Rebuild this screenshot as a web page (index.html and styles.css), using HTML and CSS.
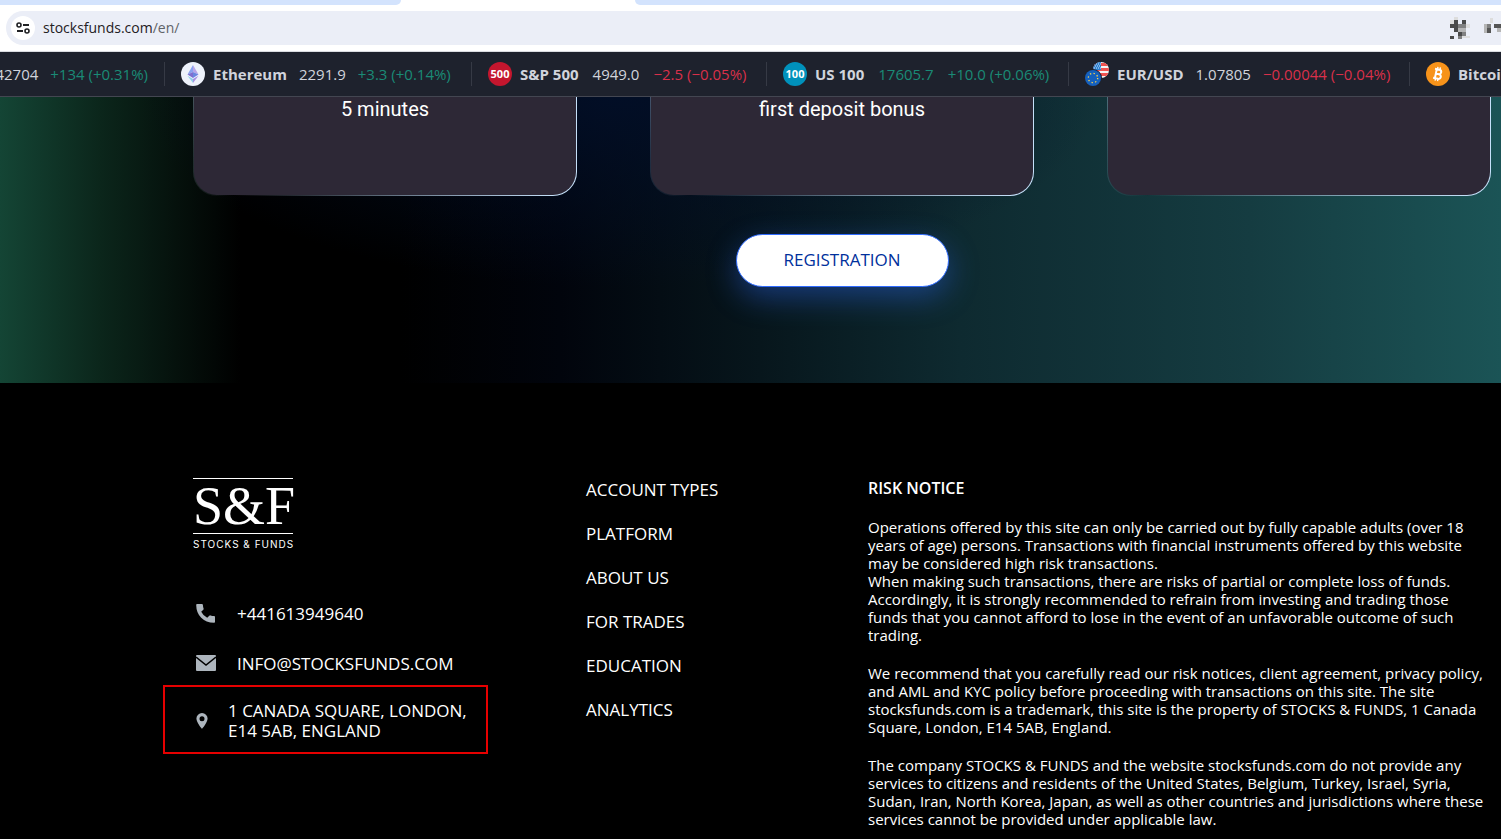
FILE: index.html
```
<!DOCTYPE html>
<html lang="en">
<head>
    <meta charset="UTF-8">
    <meta name="viewport" content="width=device-width, initial-scale=1.0">
    <title>Stocks &amp; Funds</title>
    <link rel="stylesheet" href="styles.css">
</head>
<body>
    <div class="browser">
        <div class="tabs">
            <div class="tab-left"></div>
            <div class="tab-right"></div>
        </div>
        <div class="address-bar">
            <button class="site-info" aria-label="Site information">
                <svg width="14" height="12" viewBox="0 0 14 12" fill="none" stroke="#202124" stroke-width="2">
                    <circle cx="3" cy="3" r="2" stroke-width="1.6"/>
                    <path d="M7 3h6M1 9h6"/>
                    <circle cx="11" cy="9" r="2" stroke-width="1.6"/>
                </svg>
            </button>
            <div class="url">stocksfunds.com<span>/en/</span></div>
            <svg class="blurred" width="55" height="24" viewBox="0 0 55 24">
                <path fill="#ddd" d="M8 1h4v3H8zM4 4h4v4H4zM20 8h4v4h-4zM16 20h8v2h-8zM44 2h3v5h-3z"/>
                <path fill="#4a4a4a" d="M8 4h4v4H8zM16 4h4v4h-4zM4 8h8v4H4zM8 12h4v4H8zM12 16h4v4h-4zM4 20h4v3H4z"/>
                <path fill="#808080" d="M12 8h8v4h-8zM16 16h4v4h-4zM12 20h4v3h-4zM41 8h4v4h-4z"/>
                <path fill="#b5b5b5" d="M12 12h8v4h-8zM38 8h3v9h-3zM51 12h4v4h-4z"/>
                <path fill="#555" d="M41 12h4v5h-4zM48 8h7v4h-7z"/>
            </svg>
        </div>
    </div>

    <div class="ticker">
        <div class="quote quote-first">
            <span class="price">42704</span>
            <span class="up">+134 (+0.31%)</span>
        </div>
        <div class="quote quote-eth">
            <svg width="24" height="24" viewBox="0 0 24 24">
                <circle cx="12" cy="12" r="12" fill="#eef2fb"/>
                <path d="M12 3v7L6.500 12.500z" fill="#87a1f0"/>
                <path d="M12 3v7l5.500 2.500z" fill="#b7a5e8"/>
                <path d="M12 10v6l-5.500-3.500z" fill="#7d6fd0"/>
                <path d="M12 10v6l5.500-3.500z" fill="#6a86e0"/>
                <path d="M6.500 13.800L12 21v-4z" fill="#8fd0e8"/>
                <path d="M17.500 13.800L12 21v-4z" fill="#a78fe2"/>
            </svg>
            <b>Ethereum</b>
            <span class="price">2291.9</span>
            <span class="up">+3.3 (+0.14%)</span>
        </div>
        <div class="quote quote-sp">
            <span class="index red">500</span>
            <b>S&amp;P 500</b>
            <span class="price">4949.0</span>
            <span class="down">−2.5 (−0.05%)</span>
        </div>
        <div class="quote quote-us">
            <span class="index blue">100</span>
            <b>US 100</b>
            <span class="up">17605.7</span>
            <span class="up">+10.0 (+0.06%)</span>
        </div>
        <div class="quote quote-eur">
            <svg width="24" height="24" viewBox="0 0 24 24">
                <defs>
                    <clipPath id="flag"><circle cx="16" cy="8" r="8"/></clipPath>
                </defs>
                <g clip-path="url(#flag)">
                    <path fill="#f5f5f5" d="M8 0h16v16H8z"/>
                    <path fill="#ef5350" d="M8 1h16v3H8zM8 6h16v3H8zM8 11h16v3H8z"/>
                    <path fill="#2a7fd0" d="M8 0h8v8H8z"/>
                    <path stroke="#cfe6fa" stroke-dasharray="1 1" d="M9 2h7M10 4h6M9 6h7"/>
                </g>
                <circle cx="8" cy="16" r="9" fill="#1e222d"/>
                <circle cx="8" cy="16" r="8" fill="#1560bd"/>
                <circle cx="8" cy="16" r="4.700" fill="none" stroke="#ffd54a" stroke-width="1.300" stroke-dasharray="1.300 2.390"/>
            </svg>
            <b>EUR/USD</b>
            <span class="price">1.07805</span>
            <span class="down">−0.00044 (−0.04%)</span>
        </div>
        <div class="quote">
            <svg width="24" height="24" viewBox="0 0 24 24">
                <circle cx="12" cy="12" r="12" fill="#f7931a"/>
                <g transform="rotate(12 12 12)" fill="none" stroke="#fff" stroke-width="2">
                    <path d="M8 7.500h4.500a2.200 2.200 0 0 1 0 4.500h-3h3.500a2.300 2.300 0 0 1 0 4.700H8M9.800 7v10"/>
                    <path stroke-width="1.400" d="M10.500 5v2M13 5v2M10.500 17v2M13 17v2"/>
                </g>
            </svg>
            <b>Bitcoin</b>
        </div>
    </div>

    <section class="steps">
        <div class="cards">
            <div class="card">5 minutes</div>
            <div class="card">first deposit bonus</div>
            <div class="card"></div>
        </div>
        <button class="btn">REGISTRATION</button>
    </section>

    <footer>
        <div class="company">
            <a class="logo" href="#">
                <span class="logo-name">S&amp;F</span>
                <span class="logo-text">STOCKS &amp; FUNDS</span>
            </a>
            <a class="contact" href="tel:+441613949640">
                <svg width="20" height="20" viewBox="0 0 20 20" fill="#adb5bd">
                    <path d="M1 1h5q.8 0 .9.900.1 2 .7 3.600.2.700-.3 1.200L5.200 8.800q2 4 6 6l2.100-2.100q.5-.5 1.200-.3 1.800.6 3.600.7.900.1.900.9v5q0 .8-.9.800Q10 19.500 5.200 14.700.3 10 .2 2q0-1 .8-1z"/>
                </svg>
                +441613949640
            </a>
            <a class="contact" href="mailto:info@stocksfunds.com">
                <svg width="20" height="16" viewBox="0 0 20 16" fill="#adb5bd">
                    <rect width="20" height="16" rx="1"/>
                    <path d="M0 2l10 8L20 2" fill="none" stroke="#000" stroke-width="1.500"/>
                </svg>
                INFO@STOCKSFUNDS.COM
            </a>
            <div class="contact address">
                <svg width="12" height="16" viewBox="0 0 12 16" fill="#adb5bd">
                    <path fill-rule="evenodd" d="M6 0a5.600 5.600 0 0 1 5.600 5.600C11.600 9.500 6 16 6 16S.4 9.500.4 5.600A5.600 5.600 0 0 1 6 0zm0 3.200a2.500 2.500 0 1 0 0 5 2.500 2.500 0 0 0 0-5z"/>
                </svg>
                <span>1 CANADA SQUARE, LONDON,<br>E14 5AB, ENGLAND</span>
            </div>
        </div>

        <nav>
            <a href="#">ACCOUNT TYPES</a>
            <a href="#">PLATFORM</a>
            <a href="#">ABOUT US</a>
            <a href="#">FOR TRADES</a>
            <a href="#">EDUCATION</a>
            <a href="#">ANALYTICS</a>
        </nav>

        <div class="risk">
            <h2>RISK NOTICE</h2>
            <p>Operations offered by this site can only be carried out by fully capable adults (over 18 years of age) persons. Transactions with financial instruments offered by this website may be considered high risk transactions.<br>
            When making such transactions, there are risks of partial or complete loss of funds. Accordingly, it is strongly recommended to refrain from investing and trading those funds that you cannot afford to lose in the event of an unfavorable outcome of such trading.</p>
            <p>We recommend that you carefully read our risk notices, client agreement, privacy policy, and AML and KYC policy before proceeding with transactions on this site. The site stocksfunds.com is a trademark, this site is the property of STOCKS &amp; FUNDS, 1 Canada Square, London, E14 5AB, England.</p>
            <p>The company STOCKS &amp; FUNDS and the website stocksfunds.com do not provide any services to citizens and residents of the United States, Belgium, Turkey, Israel, Syria, Sudan, Iran, North Korea, Japan, as well as other countries and jurisdictions where these services cannot be provided under applicable law.</p>
        </div>
    </footer>
</body>
</html>
```
FILE: styles.css
```
* {
    box-sizing: border-box;
}
body {
    margin: 0;
    min-height: 100vh;
    display: flex;
    flex-direction: column;
    font-family: "Open Sans", "Noto Sans", sans-serif;
    font-size: 17px;
    background: #000;
    color: #fff;
    overflow-x: hidden;
}
a {
    color: inherit;
    text-decoration: none;
}

/* browser bar */
.browser {
    background: #fff;
    border-bottom: 1px solid #dadce0;
}
.tabs {
    display: grid;
    grid-template-columns: 401px 1fr;
    column-gap: 234px;
    height: 5px;
}
.tab-left,
.tab-right {
    background: #d3e3fd;
}
.tab-left {
    border-radius: 0 0 10px 0;
}
.tab-right {
    border-radius: 0 0 0 10px;
}
.address-bar {
    display: flex;
    align-items: center;
    height: 34px;
    margin: 6px 0 6px 6px;
    padding-left: 5px;
    border-radius: 17px 0 0 17px;
    background: #ebeef7;
}
.site-info {
    display: flex;
    align-items: center;
    justify-content: center;
    width: 24px;
    height: 24px;
    padding: 0;
    border: none;
    border-radius: 50%;
    background: #fff;
}
.url {
    flex: 1;
    margin-left: 8px;
    padding-bottom: 2px;
    font-size: 14px;
    color: #1f2023;
}
.url span {
    color: #5f6368;
}

/* ticker */
.ticker {
    display: flex;
    align-items: center;
    height: 45px;
    overflow: hidden;
    background: #1e222d;
    border-bottom: 1px solid #434651;
    font-size: 15px;
    white-space: nowrap;
}
.quote {
    display: flex;
    flex-shrink: 0;
    align-items: center;
    gap: 12px;
    height: 24px;
    padding-left: 16px;
    border-left: 1px solid #363a45;
    color: #d1d4dc;
}
.quote svg,
.index {
    margin-right: -4px;
}
.quote-first {
    width: 164px;
    justify-content: flex-end;
    padding-right: 16px;
    border-left: none;
}
.quote-eth {
    width: 307px;
}
.quote-sp {
    width: 295px;
}
.quote-us {
    width: 302px;
}
.quote-eur {
    width: 341px;
}
.quote-sp,
.quote-us {
    gap: 14px;
}
.quote-sp .index,
.quote-us .index {
    margin-right: -6px;
}
.index {
    width: 24px;
    height: 24px;
    border-radius: 50%;
    font: bold 11px/24px "Open Sans", sans-serif;
    text-align: center;
    color: #fff;
}
.red {
    background: #c4162e;
}
.blue {
    background: #0091bb;
}
.up {
    color: #1a8a76;
}
.down {
    color: #d9304a;
}

/* cards */
.steps {
    padding: 0 10px 96px 193px;
    background:
        radial-gradient(ellipse 480px 190px at 620px 0, #020e26, transparent),
        linear-gradient(90deg, #144535 0, #0b261b 100px, #000 240px, #000 400px, #01040c 560px, #07161c 760px, #0e2a30 960px, #153c41 1250px, #1b5456 100%);
}
.cards {
    display: grid;
    grid-template-columns: repeat(3, 1fr);
    gap: 73px;
}
.card {
    height: 99px;
    border: 1px solid transparent;
    border-top: none;
    border-radius: 0 0 24px 24px;
    background:
        linear-gradient(#2d2836, #2d2836) padding-box,
        radial-gradient(circle at 40px 100%, transparent, #c5e0f9 320px) border-box;
    font: 20px/24px Roboto, sans-serif;
    text-align: center;
}
.btn {
    display: block;
    width: 213px;
    height: 53px;
    margin: 38px auto 0;
    padding: 0 0 2px;
    border: 1px solid #2f6bff;
    border-radius: 27px;
    background: #fff;
    box-shadow: 0 10px 30px rgba(47, 107, 255, 0.4);
    color: #00309c;
    font: 17px "Open Sans", sans-serif;
    cursor: pointer;
}

/* footer */
footer {
    flex: 1;
    display: grid;
    grid-template-columns: 393px 282px 1fr;
    padding: 95px 14px 10px 193px;
}
.logo {
    display: block;
    width: 100px;
    margin-bottom: 47px;
}
.logo-name {
    display: block;
    height: 56px;
    border-top: 1px solid #fff;
    border-bottom: 1px solid #fff;
    font: 54px/54px "Liberation Serif", serif;
}
.logo-text {
    display: block;
    font: 10px/20px Inter, sans-serif;
    letter-spacing: 1px;
    white-space: nowrap;
}
.contact {
    display: flex;
    align-items: center;
    gap: 21px;
    height: 24px;
    margin: 0 0 26px 3px;
}
.address {
    position: relative;
    gap: 20px;
    height: 40px;
    line-height: 20px;
}
.address::after {
    content: "";
    position: absolute;
    box-sizing: border-box;
    top: -16px;
    left: -33px;
    width: 325px;
    height: 69px;
    border: 2px solid #e60000;
}
nav {
    display: flex;
    flex-direction: column;
    align-items: flex-start;
    gap: 20px;
    line-height: 24px;
}
.risk {
    font-size: 15px;
    line-height: 18px;
}
.risk h2 {
    margin: 0;
    font-size: 16px;
    font-weight: 600;
    line-height: 20px;
}
.risk p {
    margin: 20px 0 0;
}
```
